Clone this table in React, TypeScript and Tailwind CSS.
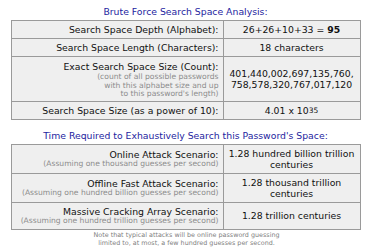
import React from "react";

const font = { fontFamily: '"DejaVu Sans", Verdana, sans-serif' };

function Label({ main, sub }: { main: string; sub?: string[] }) {
  return (
    <td className="w-[212px] border border-[#9a9a9a] bg-[#efefef] px-[4px] py-[3px] text-right align-middle">
      <div className="text-[9.3px] leading-[11px] text-[#111]">{main}</div>
      {sub && (
        <div className="text-[7.6px] leading-[8.7px] text-[#8c8c8c]">
          {sub.map((s, i) => (
            <div key={i}>{s}</div>
          ))}
        </div>
      )}
    </td>
  );
}

function Value({ children }: { children: React.ReactNode }) {
  return (
    <td className="border border-[#9a9a9a] bg-[#efefef] px-[3px] py-[3px] text-center align-middle text-[9.3px] leading-[11px] text-[#111]">
      {children}
    </td>
  );
}

export default function App() {
  return (
    <div className="w-[371px] h-[250px] bg-white pt-[6px]" style={font}>
      <div className="text-center text-[9.3px] leading-[12px] text-[#2424a0] mb-[2px]">
        Brute Force Search Space Analysis:
      </div>
      <table className="w-[350px] mx-auto border-collapse">
        <tbody>
          <tr>
            <Label main="Search Space Depth (Alphabet):" />
            <Value>
              26+26+10+33 = <b>95</b>
            </Value>
          </tr>
          <tr>
            <Label main="Search Space Length (Characters):" />
            <Value>18 characters</Value>
          </tr>
          <tr>
            <td className="w-[212px] border border-[#9a9a9a] bg-[#efefef] px-[4px] pt-[4px] pb-[2px] text-right align-middle">
              <div className="text-[9.3px] leading-[11px] text-[#111]">Exact Search Space Size (Count):</div>
              <div className="text-[7.6px] leading-[8.7px] text-[#8c8c8c] mt-[1px]">
                <div>(count of all possible passwords</div>
                <div>with this alphabet size and up</div>
                <div>to this password's length)</div>
              </div>
            </td>
            <Value>
              401,440,002,697,135,760,
              <br />
              758,578,320,767,017,120
            </Value>
          </tr>
          <tr>
            <Label main="Search Space Size (as a power of 10):" />
            <Value>
              4.01 x 10<sup className="text-[7.5px] relative top-[-1px]">35</sup>
            </Value>
          </tr>
        </tbody>
      </table>
      <div className="text-center text-[9.3px] leading-[12px] text-[#2424a0] mt-[10px] mb-[2px]">
        Time Required to Exhaustively Search this Password's Space:
      </div>
      <table className="w-[350px] mx-auto border-collapse">
        <tbody>
          <tr>
            <Label main="Online Attack Scenario:" sub={["(Assuming one thousand guesses per second)"]} />
            <Value>
              1.28 hundred billion trillion
              <br />
              centuries
            </Value>
          </tr>
          <tr>
            <Label main="Offline Fast Attack Scenario:" sub={["(Assuming one hundred billion guesses per second)"]} />
            <Value>
              1.28 thousand trillion
              <br />
              centuries
            </Value>
          </tr>
          <tr>
            <Label main="Massive Cracking Array Scenario:" sub={["(Assuming one hundred trillion guesses per second)"]} />
            <Value>1.28 trillion centuries</Value>
          </tr>
        </tbody>
      </table>
      <div className="text-center text-[6.4px] leading-[8px] text-[#808080] mt-[1px] pl-[2px]">
        <div>Note that typical attacks will be online password guessing</div>
        <div>limited to, at most, a few hundred guesses per second.</div>
      </div>
    </div>
  );
}
